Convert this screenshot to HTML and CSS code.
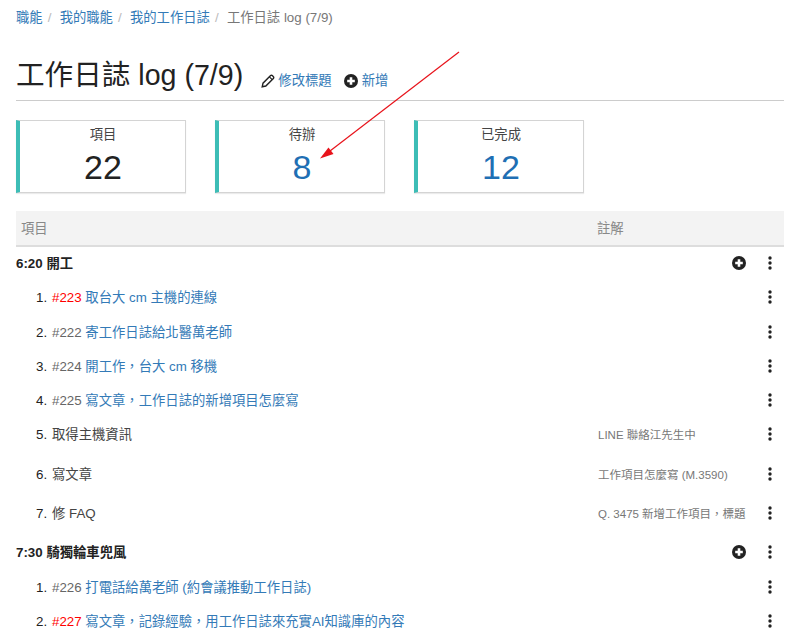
FILE: index.html
```html
<!DOCTYPE html>
<html lang="zh-Hant">
<head>
<meta charset="utf-8">
<title>工作日誌 log (7/9)</title>
<link rel="stylesheet" href="styles.css">
</head>
<body>
<svg width="0" height="0" class="defs">
  <symbol id="plus" viewBox="0 0 14 14"><circle cx="7" cy="7" r="7" fill="#222"/><path d="M7 3.2v7.6M3.2 7h7.6" stroke="#fff" stroke-width="2.6"/></symbol>
  <symbol id="dots" viewBox="0 0 4 14"><circle cx="2" cy="2" r="1.7"/><circle cx="2" cy="7" r="1.7"/><circle cx="2" cy="12" r="1.7"/></symbol>
</svg>
<nav class="crumbs">
  <a href="#">職能</a><span class="sep">/</span>
  <a href="#">我的職能</a><span class="sep">/</span>
  <a href="#">我的工作日誌</a><span class="sep">/</span>
  <span class="here">工作日誌 log (7/9)</span>
</nav>
<header class="title-row">
  <h1>工作日誌 log (7/9)</h1>
  <a class="act" href="#"><svg class="pencil" viewBox="0 0 14 14"><path d="M1.2 12.8l.8-3.6L9.6 1.6a1.2 1.2 0 0 1 1.7 0l1.1 1.1a1.2 1.2 0 0 1 0 1.7L4.8 12z" fill="none" stroke="#222" stroke-width="1.4"/><path d="M8.4 2.8l2.8 2.8" stroke="#222" stroke-width="1.2"/></svg>修改標題</a>
  <a class="act" href="#"><svg class="ico"><use href="#plus"/></svg>新增</a>
</header>
<section class="stats">
  <div class="stat"><div class="lab">項目</div><div class="num">22</div></div>
  <div class="stat"><div class="lab">待辦</div><div class="num blue">8</div></div>
  <div class="stat"><div class="lab">已完成</div><div class="num blue">12</div></div>
</section>
<section class="tbl">
  <div class="head"><span class="c1">項目</span><span class="c2">註解</span></div>

  <div class="row group"><b class="c1">6:20 開工</b><svg class="ico add"><use href="#plus"/></svg><svg class="dots"><use href="#dots"/></svg></div>
  <div class="row"><span class="c1 item"><i>1.</i><em class="red">#223</em> <a href="#">取台大 cm 主機的連線</a></span><svg class="dots"><use href="#dots"/></svg></div>
  <div class="row"><span class="c1 item"><i>2.</i><em>#222</em> <a href="#">寄工作日誌給北醫萬老師</a></span><svg class="dots"><use href="#dots"/></svg></div>
  <div class="row"><span class="c1 item"><i>3.</i><em>#224</em> <a href="#">開工作，台大 cm 移機</a></span><svg class="dots"><use href="#dots"/></svg></div>
  <div class="row"><span class="c1 item"><i>4.</i><em>#225</em> <a href="#">寫文章，工作日誌的新增項目怎麼寫</a></span><svg class="dots"><use href="#dots"/></svg></div>
  <div class="row tall"><span class="c1 item"><i>5.</i>取得主機資訊</span><small class="c2">LINE 聯絡江先生中</small><svg class="dots"><use href="#dots"/></svg></div>
  <div class="row tall"><span class="c1 item"><i>6.</i>寫文章</span><small class="c2">工作項目怎麼寫 (M.3590)</small><svg class="dots"><use href="#dots"/></svg></div>
  <div class="row tall"><span class="c1 item"><i>7.</i>修 FAQ</span><small class="c2">Q. 3475 新增工作項目，標題</small><svg class="dots"><use href="#dots"/></svg></div>

  <div class="row group"><b class="c1">7:30 騎獨輪車兜風</b><svg class="ico add"><use href="#plus"/></svg><svg class="dots"><use href="#dots"/></svg></div>
  <div class="row"><span class="c1 item"><i>1.</i><em>#226</em> <a href="#">打電話給萬老師 (約會議推動工作日誌)</a></span><svg class="dots"><use href="#dots"/></svg></div>
  <div class="row"><span class="c1 item"><i>2.</i><em class="red">#227</em> <a href="#">寫文章，記錄經驗，用工作日誌來充實AI知識庫的內容</a></span><svg class="dots"><use href="#dots"/></svg></div>
</section>
<svg class="arrow" viewBox="0 0 800 639"><path d="M459 52L330 151" stroke="#e8131b" stroke-width="1.2" fill="none"/><path d="M320 158.500L328.500 147.500L333.500 154z" fill="#e8131b"/></svg>
</body>
</html>
```
FILE: styles.css
```css
* { box-sizing: border-box; }
html, body { margin: 0; height: 639px; overflow: hidden; }
body {
  position: relative;
  padding: 0 16px;
  background: #fff;
  color: #333;
  font: 13.33px/1.4 "Liberation Sans", "Noto Sans CJK TC", sans-serif;
}
a { color: #337ab7; text-decoration: none; }
.defs { position: absolute; }

.crumbs { display: flex; align-items: center; height: 36px; padding-top: 1px; color: #777; }
.sep { color: #bbb; margin: 0 8.15px 0 5.15px; }
.here { color: #777; }

.title-row {
  display: flex;
  align-items: flex-start;
  height: 65px;
  padding-top: 17px;
  border-bottom: 1px solid #ccc;
}
h1 { margin: 0 17.6px 0 0; font-size: 28.6px; font-weight: 400; line-height: 44px; color: #222; }
.act { display: inline-flex; align-items: center; margin: 19px 12px 0 0; }
.pencil { width: 14px; height: 14px; margin-right: 3.500px; }
.ico { width: 14px; height: 14px; flex: none; }
.act .ico { margin-right: 4px; }

.stats { display: flex; gap: 29px; margin-top: 19px; }
.stat {
  width: 170px;
  height: 73px;
  padding-left: 1px;
  border: 1px solid #d4d4d4;
  border-left: 4px solid #3dbdb6;
  box-shadow: 0 1px 1px rgba(0, 0, 0, .08);
  text-align: center;
}
.lab { height: 23px; padding-top: 4px; line-height: 20px; color: #444; }
.num { font-size: 34px; line-height: 46px; color: #222; }
.blue { color: #1f6fb4; }

.tbl { margin-top: 18px; }
.head {
  display: flex;
  align-items: center;
  height: 36px;
  padding-top: 3px;
  background: #f3f3f3;
  border-bottom: 2px solid #ddd;
  color: #888;
}
.head .c1 { padding-left: 5px; }
.head .c2 { margin-left: -1px; }
.c1 { flex: 0 0 582px; }
.c2 { flex: 1; }
.row { display: flex; align-items: flex-start; height: 34.3px; padding-top: 8px; position: relative; }
.tall { height: 39.3px; }
.group b { color: #222; }
.item { padding-left: 20px; color: #444; white-space: nowrap; }
.item i { font-style: normal; color: #222; display: inline-block; width: 16px; }
.item em { font-style: normal; color: #666; }
.item em.red { color: #f00; }
small { font-size: 11.5px; line-height: 19px; color: #777; white-space: nowrap; overflow: hidden; }
.dots { position: absolute; left: 752px; top: 9px; width: 4px; height: 14px; fill: #222; }
.add { position: absolute; left: 716px; top: 9px; }

.arrow { position: absolute; left: 0; top: 0; width: 800px; height: 639px; pointer-events: none; }
```
